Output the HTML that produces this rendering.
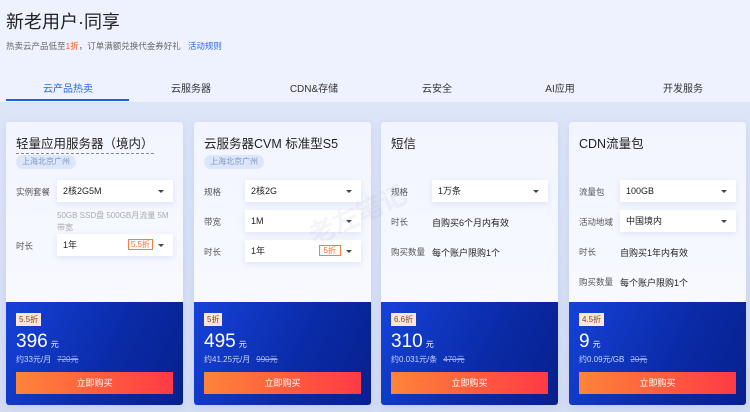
<!DOCTYPE html>
<html><head><meta charset="utf-8"><style>
*{margin:0;padding:0;box-sizing:border-box}
body{width:750px;height:412px;overflow:hidden;background:#eef2fe;font-family:"Liberation Sans","Noto Sans CJK SC",sans-serif;color:#222;position:relative}
.a{position:absolute;white-space:nowrap}
.strip{position:absolute;left:0;top:102px;width:750px;height:310px;background:linear-gradient(#dde5f8,#d4ddf4)}
.tab{position:absolute;top:80px;font-size:10px;color:#333;transform:translateX(-50%)}
.card{position:absolute;top:122px;width:177px;height:283px;border-radius:3px;background:linear-gradient(#f2f5ff,#fbfcff);box-shadow:0 2px 8px rgba(120,140,200,.2);overflow:hidden}
.t{position:absolute;left:10px;font-size:12.5px;color:#222}
.tag{position:absolute;left:10px;top:33px;height:14px;padding:0 6px;border-radius:7px;background:#dce6fa;color:#7f95c0;font-size:8px;line-height:14px}
.lab{position:absolute;left:10px;font-size:8.5px;color:#555}
.sel{position:absolute;left:51px;width:116px;height:22px;background:#fff;box-shadow:0 2px 6px rgba(120,140,200,.18);font-size:9px;line-height:22px;padding-left:6px;color:#222}
.sel:after{content:"";position:absolute;right:9px;top:10px;border:3px solid transparent;border-top-color:#444;border-bottom:0}
.val{position:absolute;left:51px;font-size:9px;color:#222}
.disc{position:absolute;right:20px;top:5px;height:11px;padding:0 2px;border:1px solid #ff7a3d;color:#ff6a2a;font-size:8px;line-height:10px}
.blue{position:absolute;left:0;top:180px;width:177px;height:103px;background:linear-gradient(115deg,#1542d8,#0a2aa6 60%,#07208c)}
.badge{position:absolute;left:10px;top:11px;height:13px;padding:0 3px;background:#fde6d6;color:#6a4a3a;font-size:8px;line-height:13px}
.price{position:absolute;left:10px;top:29px;font-size:19px;color:#fff}
.price small{font-size:8px;margin-left:3px}
.sub{position:absolute;left:10px;top:52px;font-size:8px;color:#c9d4ff}
.sub s{margin-left:6px;color:#9fb0e8}
.btn{position:absolute;left:10px;top:70px;width:157px;height:22px;background:linear-gradient(90deg,#ff8439,#ff3a44);color:#fff;font-size:9px;text-align:center;line-height:22px}
</style></head><body>
<div class="strip"></div>
<div class="a" style="left:6px;top:8px;font-size:18px;color:#222">新老用户·同享</div>
<div class="a" style="left:6px;top:40px;font-size:8.5px;color:#666">热卖云产品低至<span style="color:#ff5a1f">1折</span>，订单满额兑换代金券好礼 &nbsp;&nbsp;<span style="color:#2a6ae0">活动规则</span></div>
<div class="tab" style="left:68px;color:#2a6ae0">云产品热卖</div>
<div class="tab" style="left:191px">云服务器</div>
<div class="tab" style="left:314px">CDN&amp;存储</div>
<div class="tab" style="left:437px">云安全</div>
<div class="tab" style="left:560px">AI应用</div>
<div class="tab" style="left:683px">开发服务</div>
<div class="a" style="left:6px;top:99px;width:123px;height:2px;background:#1f5fe0"></div>

<div class="card" style="left:6px">
<div class="t" style="top:11px;border-bottom:1px dashed #888;padding-bottom:1px">轻量应用服务器（境内）</div>
<div class="tag">上海北京广州</div>
<div class="lab" style="top:64px">实例套餐</div><div class="sel" style="top:58px">2核2G5M</div>
<div class="a" style="left:51px;top:88px;font-size:8px;color:#aaa;line-height:12px;white-space:normal;width:116px">50GB SSD盘 500GB月流量 5M带宽</div>
<div class="lab" style="top:118px">时长</div><div class="sel" style="top:112px">1年<span class="disc">5.5折</span></div>
<div class="blue"><div class="badge">5.5折</div><div class="price">396<small>元</small></div><div class="sub">约33元/月<s>720元</s></div><div class="btn">立即购买</div></div>
</div>

<div class="card" style="left:194px">
<div class="t" style="top:11px">云服务器CVM 标准型S5</div>
<div class="tag">上海北京广州</div>
<div class="lab" style="top:64px">规格</div><div class="sel" style="top:58px">2核2G</div>
<div class="lab" style="top:94px">带宽</div><div class="sel" style="top:88px">1M</div>
<div class="lab" style="top:124px">时长</div><div class="sel" style="top:118px">1年<span class="disc" style="padding:0 4px">5折</span></div>
<div class="blue"><div class="badge">5折</div><div class="price">495<small>元</small></div><div class="sub">约41.25元/月<s>990元</s></div><div class="btn">立即购买</div></div>
</div>

<div class="card" style="left:381px">
<div class="t" style="top:11px">短信</div>
<div class="lab" style="top:64px">规格</div><div class="sel" style="top:58px">1万条</div>
<div class="lab" style="top:94px">时长</div><div class="val" style="top:94px">自购买6个月内有效</div>
<div class="lab" style="top:124px">购买数量</div><div class="val" style="top:124px">每个账户限购1个</div>
<div class="blue"><div class="badge">6.6折</div><div class="price">310<small>元</small></div><div class="sub">约0.031元/条<s>470元</s></div><div class="btn">立即购买</div></div>
</div>

<div class="card" style="left:569px">
<div class="t" style="top:11px">CDN流量包</div>
<div class="lab" style="top:64px">流量包</div><div class="sel" style="top:58px">100GB</div>
<div class="lab" style="top:94px">活动地域</div><div class="sel" style="top:88px">中国境内</div>
<div class="lab" style="top:124px">时长</div><div class="val" style="top:124px">自购买1年内有效</div>
<div class="lab" style="top:154px">购买数量</div><div class="val" style="top:154px">每个账户限购1个</div>
<div class="blue"><div class="badge">4.5折</div><div class="price">9<small>元</small></div><div class="sub">约0.09元/GB<s>20元</s></div><div class="btn">立即购买</div></div>
</div>

<div class="a" style="left:305px;top:195px;font-size:26px;font-weight:bold;color:rgba(150,160,190,.1);transform:rotate(-25deg)">老左笔记</div>
</body></html>
